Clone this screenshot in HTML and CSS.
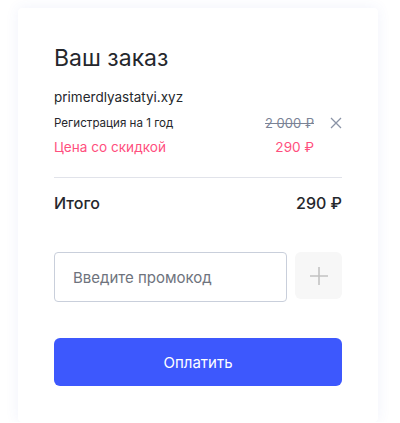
FILE: index.html
```html
<!DOCTYPE html>
<html lang="ru">
<head>
<meta charset="utf-8">
<link rel="stylesheet" href="styles.css">
</head>
<body>
<div class="page">
  <div class="card">
    <h1 class="title">Ваш заказ</h1>
    <div class="domain">primerdlyastatyi.xyz</div>
    <div class="row reg">
      <span class="label">Регистрация на 1 год</span>
      <span class="right">
        <span class="old">2 000 ₽</span>
        <svg class="close" width="12" height="12" viewBox="0 0 12 12"><path d="M1 1L11 11M11 1L1 11" stroke="#8a93a6" stroke-width="1.3" fill="none"/></svg>
      </span>
    </div>
    <div class="row discount">
      <span>Цена со скидкой</span>
      <span class="right"><span class="new">290 ₽</span><span class="spacer"></span></span>
    </div>
    <div class="sep"></div>
    <div class="row total">
      <span>Итого</span>
      <span>290 ₽</span>
    </div>
    <div class="promo">
      <input class="promo-input" type="text" placeholder="Введите промокод">
      <button class="promo-add" type="button">
        <svg width="20" height="20" viewBox="0 0 20 20"><path d="M10 1V19M1 10H19" stroke="#c2c2c2" stroke-width="1.6" fill="none"/></svg>
      </button>
    </div>
    <button class="pay" type="button">Оплатить</button>
  </div>
</div>
</body>
</html>
```
FILE: styles.css
```css
* { box-sizing: border-box; }
html, body { margin: 0; padding: 0; background: #fff; }
body { font-family: Inter, "Noto Sans", sans-serif; color: #25272c; }
.page { padding: 8px 0 0 18px; }
.card {
  width: 360px;
  height: 414px;
  background: #fff;
  border-radius: 4px;
  box-shadow: 0 0 14px rgba(70, 90, 200, 0.08);
  padding: 35px 36px 0 36px;
}
.title {
  margin: 0;
  font-size: 23px;
  font-weight: 400;
  line-height: 30px;
  color: #25272c;
}
.domain {
  margin-top: 14px;
  font-size: 13.5px;
  line-height: 20px;
}
.row {
  display: flex;
  justify-content: space-between;
  align-items: center;
}
.reg {
  margin-top: 7px;
  font-size: 11.6px;
  line-height: 18px;
}
.right { display: flex; align-items: center; gap: 16px; }
.old {
  color: #7a8396;
  text-decoration: line-through;
  font-size: 13px;
}
.close { display: block; }
.discount {
  margin-top: 5px;
  font-size: 13.6px;
  line-height: 20px;
  color: #ff4f7e;
}
.spacer { width: 12px; }
.sep {
  margin-top: 20px;
  height: 1px;
  background: #e1e3ea;
}
.total {
  margin-top: 14px;
  font-size: 16px;
  line-height: 22px;
  font-weight: 500;
}
.promo {
  margin-top: 38px;
  display: flex;
  gap: 8px;
  align-items: flex-start;
}
.promo-input {
  width: 233px;
  height: 50px;
  border: 1px solid #c9cfdb;
  border-radius: 4px;
  padding: 0 18px;
  font-family: inherit;
  font-size: 15px;
  color: #25272c;
  outline: none;
}
.promo-input::placeholder { color: #6e737d; }
.promo-add {
  width: 47px;
  height: 47px;
  border: none;
  border-radius: 6px;
  background: #f7f7f7;
  display: flex;
  align-items: center;
  justify-content: center;
  padding: 0;
}
.promo-add svg { display: block; }
.pay {
  display: block;
  margin-top: 36px;
  width: 288px;
  height: 48px;
  border: none;
  border-radius: 6px;
  background: #3d58fd;
  color: #fff;
  font-family: inherit;
  font-size: 15px;
  font-weight: 400;
}
```
